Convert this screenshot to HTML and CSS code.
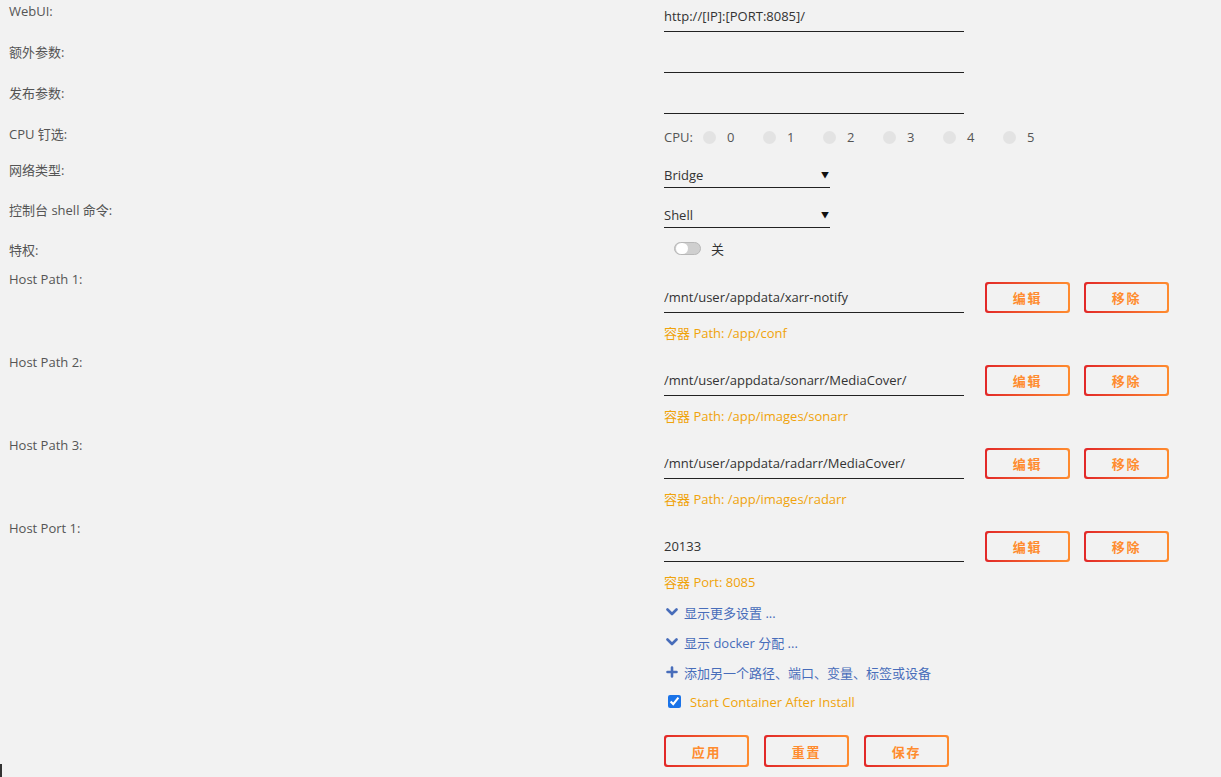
FILE: index.html
```html
<!DOCTYPE html>
<html lang="zh">
<head>
<meta charset="utf-8">
<title>Docker Template</title>
<link rel="stylesheet" href="styles.css">
</head>
<body>
<div class="form">
  <div class="row r41"><div class="label">WebUI:</div><div class="field"><input class="text" type="text" value="http://[IP]:[PORT:8085]/"></div></div>
  <div class="row r41"><div class="label">额外参数:</div><div class="field"><input class="text" type="text" value=""></div></div>
  <div class="row r41"><div class="label">发布参数:</div><div class="field"><input class="text" type="text" value=""></div></div>
  <div class="row rcpu"><div class="label">CPU 钉选:</div>
    <div class="field cpu">
      <span class="cpu-title">CPU:</span>
      <span class="core"><span class="dot"></span>0</span>
      <span class="core"><span class="dot"></span>1</span>
      <span class="core"><span class="dot"></span>2</span>
      <span class="core"><span class="dot"></span>3</span>
      <span class="core"><span class="dot"></span>4</span>
      <span class="core"><span class="dot"></span>5</span>
    </div>
  </div>
  <div class="row r40"><div class="label">网络类型:</div><div class="field"><div class="select"><span>Bridge</span><span class="arrow">&#9660;</span></div></div></div>
  <div class="row r40"><div class="label">控制台 shell 命令:</div><div class="field"><div class="select"><span>Shell</span><span class="arrow">&#9660;</span></div></div></div>
  <div class="row rpriv"><div class="label">特权:</div><div class="field priv"><span class="toggle"><span class="knob"></span></span><span class="off">关</span></div></div>

  <div class="row rblock"><div class="label">Host Path 1:</div>
    <div class="field">
      <div class="line"><input class="text" type="text" value="/mnt/user/appdata/xarr-notify"><span class="btn b-edit"><span class="btn-in">编辑</span></span><span class="btn"><span class="btn-in">移除</span></span></div>
      <div class="note">容器 Path: /app/conf</div>
    </div>
  </div>
  <div class="row rblock"><div class="label">Host Path 2:</div>
    <div class="field">
      <div class="line"><input class="text" type="text" value="/mnt/user/appdata/sonarr/MediaCover/"><span class="btn b-edit"><span class="btn-in">编辑</span></span><span class="btn"><span class="btn-in">移除</span></span></div>
      <div class="note">容器 Path: /app/images/sonarr</div>
    </div>
  </div>
  <div class="row rblock"><div class="label">Host Path 3:</div>
    <div class="field">
      <div class="line"><input class="text" type="text" value="/mnt/user/appdata/radarr/MediaCover/"><span class="btn b-edit"><span class="btn-in">编辑</span></span><span class="btn"><span class="btn-in">移除</span></span></div>
      <div class="note">容器 Path: /app/images/radarr</div>
    </div>
  </div>
  <div class="row rblock"><div class="label">Host Port 1:</div>
    <div class="field">
      <div class="line"><input class="text" type="text" value="20133"><span class="btn b-edit"><span class="btn-in">编辑</span></span><span class="btn"><span class="btn-in">移除</span></span></div>
      <div class="note">容器 Port: 8085</div>
    </div>
  </div>

  <div class="row rtail"><div class="label"></div>
    <div class="field">
      <div class="link"><svg class="ico" viewBox="0 0 12 12"><path d="M1.5 3.5 L6 8 L10.5 3.5" fill="none" stroke="#486dba" stroke-width="2.6" stroke-linecap="round" stroke-linejoin="round"/></svg>显示更多设置 ...</div>
      <div class="link"><svg class="ico" viewBox="0 0 12 12"><path d="M1.5 3.5 L6 8 L10.5 3.5" fill="none" stroke="#486dba" stroke-width="2.6" stroke-linecap="round" stroke-linejoin="round"/></svg>显示 docker 分配 ...</div>
      <div class="link"><svg class="ico" viewBox="0 0 12 12"><path d="M6 1.5 V10.5 M1.5 6 H10.5" fill="none" stroke="#486dba" stroke-width="2.6" stroke-linecap="round"/></svg>添加另一个路径、端口、变量、标签或设备</div>
      <label class="check"><input type="checkbox" checked><span>Start Container After Install</span></label>
      <div class="actions">
        <span class="btn"><span class="btn-in">应用</span></span>
        <span class="btn"><span class="btn-in">重置</span></span>
        <span class="btn"><span class="btn-in">保存</span></span>
      </div>
    </div>
  </div>
</div>
<span class="caret"></span>
</body>
</html>
```
FILE: styles.css
```css
html, body {
  margin: 0;
  padding: 0;
  background: #f2f2f2;
}
body {
  font-family: "Open Sans", "Noto Sans CJK SC", sans-serif;
  font-size: 13px;
  color: #555;
  height: 777px;
  overflow: hidden;
}
.row {
  display: grid;
  grid-template-columns: 664px 1fr;
}
.label {
  padding-left: 9px;
  line-height: 22px;
  color: #555;
}
.field {
  color: #333;
}
.r41 { height: 41px; }
.r40 { height: 40px; }
.rcpu { height: 36px; }
.rpriv { height: 29px; }
.rblock { height: 83px; }

input.text {
  display: block;
  width: 300px;
  height: 32px;
  box-sizing: border-box;
  border: 0;
  border-bottom: 1px solid #222;
  background: transparent;
  padding: 0;
  font-family: inherit;
  font-size: 13px;
  color: #333;
  outline: none;
}

.cpu {
  display: flex;
  align-items: center;
  height: 28px;
  color: #555;
}
.cpu-title { width: 39px; }
.core {
  display: inline-flex;
  align-items: center;
  width: 60px;
}
.dot {
  width: 13px;
  height: 13px;
  border-radius: 50%;
  background: #e3e3e3;
  margin-right: 11px;
}

.select {
  margin-top: 3px;
  width: 166px;
  height: 26px;
  box-sizing: border-box;
  border-bottom: 1px solid #222;
  display: flex;
  justify-content: space-between;
  align-items: center;
  color: #333;
}
.arrow {
  font-size: 8px;
  color: #111;
  margin-right: 1px;
}

.priv {
  display: flex;
  align-items: center;
  height: 19px;
  padding-left: 10px;
}
.toggle {
  width: 27px;
  height: 13px;
  box-sizing: border-box;
  border: 1px solid #b8b8b8;
  border-radius: 7px;
  background: #cfcfcf;
  display: flex;
  align-items: center;
  padding-left: 1px;
}
.knob {
  width: 12px;
  height: 11px;
  border-radius: 6px;
  background: #fff;
}
.off {
  margin-left: 10px;
  color: #333;
}

.line {
  display: flex;
  align-items: flex-start;
  margin-top: 13px;
}
.note {
  margin-top: 10px;
  line-height: 20px;
  color: #f0a30a;
}

.btn {
  display: inline-block;
  width: 85px;
  height: 32px;
  box-sizing: border-box;
  padding: 2px;
  border-radius: 3px;
  background: linear-gradient(90deg, #e22828, #ff8c2f);
}
.line .btn {
  margin-top: 1px;
  height: 31px;
  margin-left: 14px;
}
.line .b-edit { margin-left: 21px; }
.btn-in {
  display: flex;
  align-items: center;
  justify-content: center;
  height: 100%;
  border-radius: 2px;
  background: #f2f2f2;
  color: #ff8c2f;
  font-weight: bold;
  font-size: 13px;
  letter-spacing: 1.8px;
}

.rtail { margin-top: -3px; }
.link {
  display: flex;
  align-items: center;
  height: 30px;
  color: #486dba;
}
.ico {
  width: 12px;
  height: 12px;
  margin-left: 2px;
  margin-right: 6px;
}
.check {
  display: flex;
  align-items: center;
  height: 29px;
  color: #f0a30a;
  font-size: 13px;
}
.check input {
  margin: 0 9px 0 4px;
  width: 13px;
  height: 13px;
  accent-color: #1a73e8;
}
.actions {
  display: flex;
  gap: 15px;
  margin-top: 19px;
}
.caret {
  position: fixed;
  left: 0;
  bottom: 0;
  width: 2px;
  height: 13px;
  background: #333;
}
```
